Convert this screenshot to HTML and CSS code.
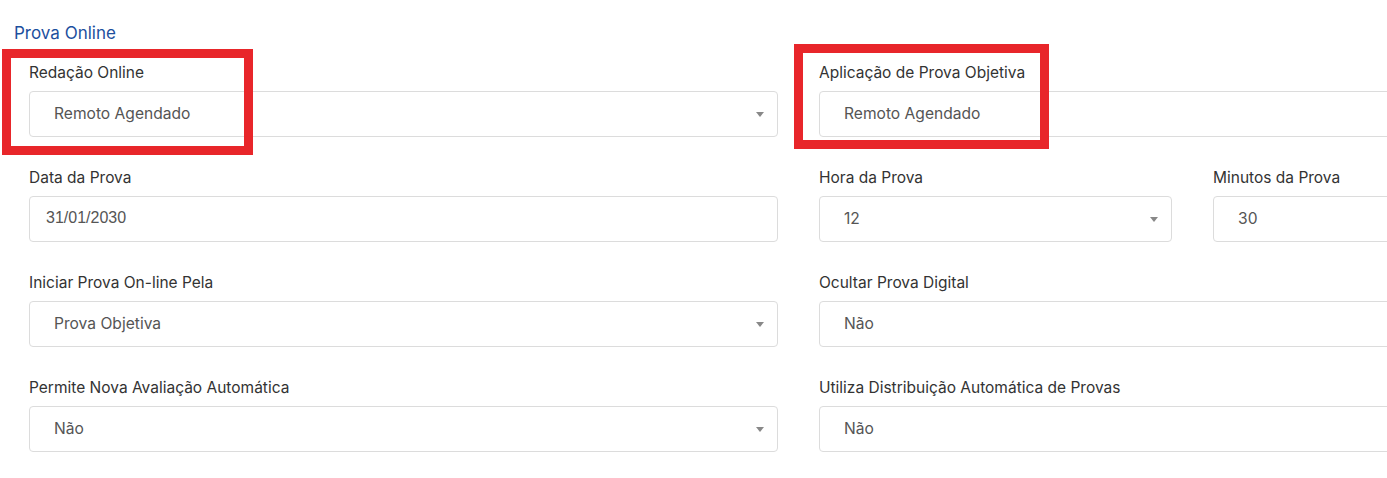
FILE: index.html
```html
<!DOCTYPE html>
<html lang="pt-BR">
<head>
  <meta charset="UTF-8">
  <meta name="viewport" content="width=device-width, initial-scale=1">
  <title>Prova Online</title>
  <link rel="stylesheet" href="styles.css">
</head>
<body>
  <!-- Bloco de configuração da prova online -->
  <div class="prova-block">
    <h3 class="block-title">Prova Online</h3>

    <div class="form-grid">
      <div class="field">
        <span class="mark mark-left"></span>
        <label class="field-label">Redação Online</label>
        <div class="select-box">
          <span class="value">Remoto Agendado</span>
          <span class="caret"></span>
        </div>
      </div>

      <div class="field">
        <span class="mark mark-right"></span>
        <label class="field-label">Aplicação de Prova Objetiva</label>
        <div class="select-box">
          <span class="value">Remoto Agendado</span>
        </div>
      </div>

      <div class="field">
        <label class="field-label">Data da Prova</label>
        <div class="text-box date">31/01/2030</div>
      </div>

      <div class="field-pair">
        <div class="field">
          <label class="field-label">Hora da Prova</label>
          <div class="select-box">
            <span class="value">12</span>
            <span class="caret"></span>
          </div>
        </div>
        <div class="field">
          <label class="field-label">Minutos da Prova</label>
          <div class="select-box">
            <span class="value">30</span>
          </div>
        </div>
      </div>

      <div class="field">
        <label class="field-label">Iniciar Prova On-line Pela</label>
        <div class="select-box">
          <span class="value">Prova Objetiva</span>
          <span class="caret"></span>
        </div>
      </div>

      <div class="field">
        <label class="field-label">Ocultar Prova Digital</label>
        <div class="select-box">
          <span class="value">Não</span>
        </div>
      </div>

      <div class="field">
        <label class="field-label">Permite Nova Avaliação Automática</label>
        <div class="select-box">
          <span class="value">Não</span>
          <span class="caret"></span>
        </div>
      </div>

      <div class="field">
        <label class="field-label">Utiliza Distribuição Automática de Provas</label>
        <div class="select-box">
          <span class="value">Não</span>
        </div>
      </div>
    </div>
  </div>
</body>
</html>
```

FILE: styles.css
```css
/* Ustawienia globalne */
* {
  box-sizing: border-box;
  margin: 0;
  padding: 0;
}

body {
  background-color: white;
  font-family: Inter, "Noto Sans", sans-serif;
  overflow: hidden;
  width: 1387px;
  height: 478px;
}

.prova-block {
  padding: 23px 0 0 14px;
  width: 1387px;
  overflow: hidden;
}

.block-title {
  font-size: 17px;
  line-height: 20px;
  font-weight: 400;
  color: #1d4f9e;
  margin-bottom: 20px;
}

.form-grid {
  display: grid;
  grid-template-columns: 749px 749px;
  column-gap: 41px;
  row-gap: 31px;
  margin-left: 15px;
}

.field-pair {
  display: grid;
  grid-template-columns: 353px 1fr;
  column-gap: 41px;
}

.field {
  position: relative;
  display: flex;
  flex-direction: column;
}

.field-label {
  font-size: 15.5px;
  line-height: 20px;
  color: #333;
  margin-bottom: 8px;
}

.select-box,
.text-box {
  position: relative;
  height: 46px;
  border: 1px solid #dcdcdc;
  border-radius: 4px;
  display: flex;
  align-items: center;
  padding: 0 0 2px 24px;
  font-size: 15.6px;
  color: #555;
}

.text-box.date {
  padding-left: 16px;
  font-family: "Liberation Sans", Arial, sans-serif;
  font-size: 16px;
}

.caret {
  position: absolute;
  right: 13px;
  top: 20px;
  width: 0;
  height: 0;
  border-left: 4px solid transparent;
  border-right: 4px solid transparent;
  border-top: 5px solid #888;
}

/* Czerwone ramki adnotacji */
.mark {
  position: absolute;
  border: 9px solid #e8262a;
  pointer-events: none;
  z-index: 2;
}

.mark-left {
  left: -27px;
  top: -14px;
  width: 251px;
  height: 106px;
}

.mark-right {
  left: -25px;
  top: -19px;
  width: 255px;
  height: 105px;
}
```
